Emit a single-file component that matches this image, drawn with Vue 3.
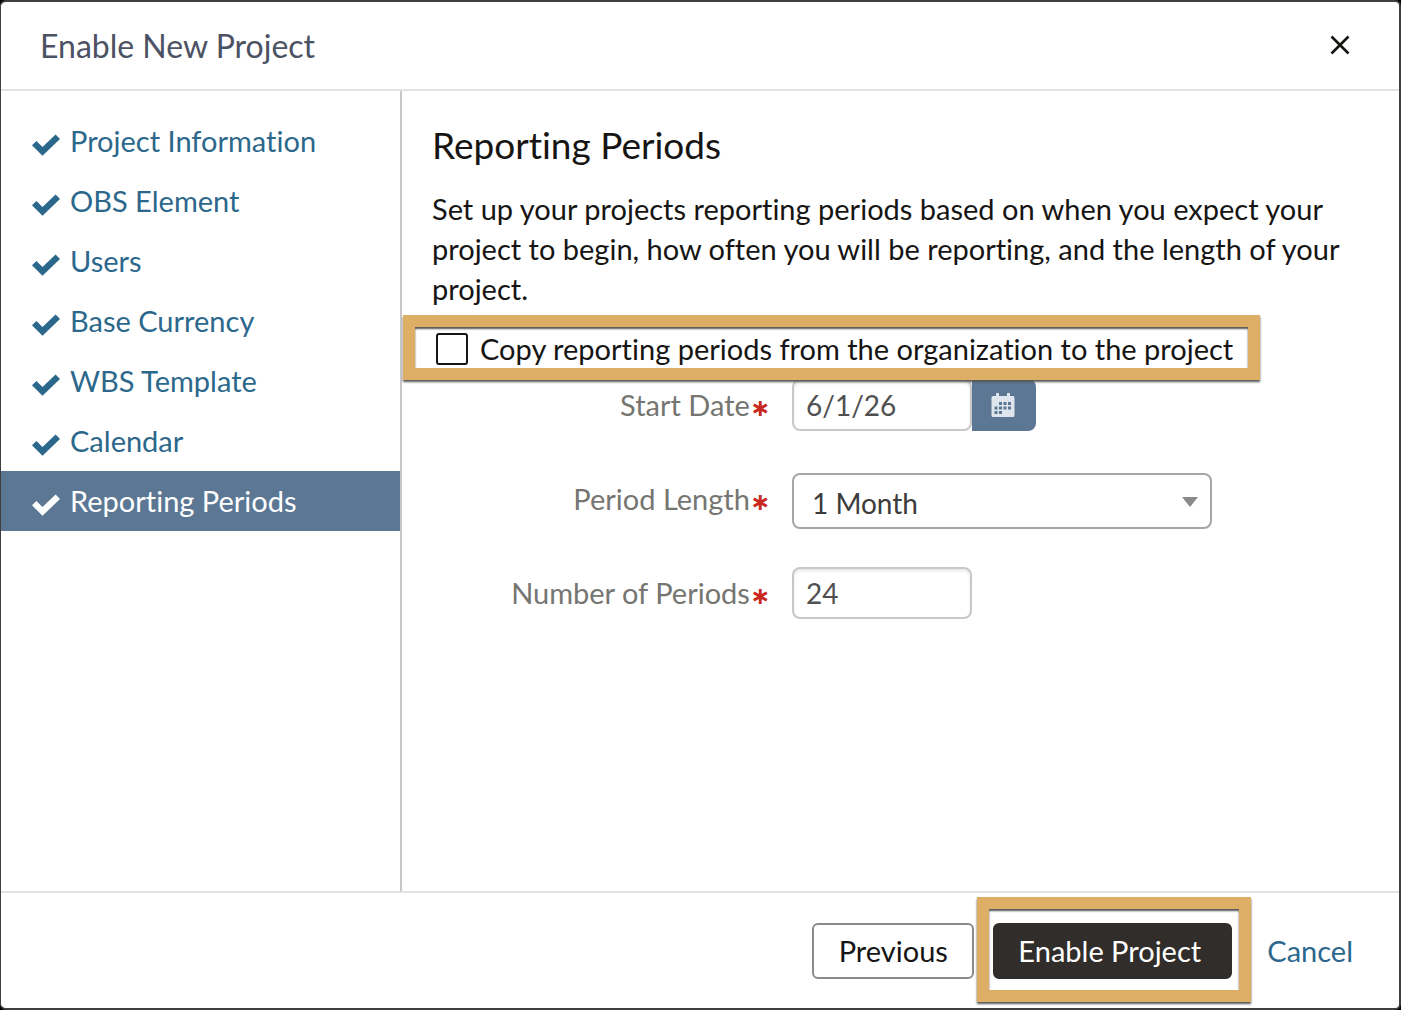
<script setup>
import { ref } from 'vue'

const steps = ['Project Information', 'OBS Element', 'Users', 'Base Currency', 'WBS Template', 'Calendar', 'Reporting Periods']
const active = ref('Reporting Periods')
const copyPeriods = ref(false)
const startDate = ref('6/1/26')
const periodLength = ref('1 Month')
const periodCount = ref('24')
</script>

<template>
  <div class="dialog" role="dialog" aria-labelledby="dialog-title">
    <header class="header">
      <h1 id="dialog-title" class="title">Enable New Project</h1>
      <button class="close" type="button" aria-label="Close">
        <svg width="20" height="20" viewBox="0 0 20 20" fill="none" stroke="#161513" stroke-width="2.6">
          <path d="M1.5 1.5 18.5 18.5M18.5 1.5 1.5 18.5" />
        </svg>
      </button>
    </header>

    <div class="body">
      <nav class="steps">
        <a v-for="step in steps" :key="step" href="#" class="step" :class="{ active: step === active }" @click.prevent="active = step">
          <svg class="check" width="28" height="22" viewBox="0 0 28 22" fill="currentColor">
            <path d="M0 11.3 4.4 6.9 10.5 13 23.6.6 28 5 10.5 21.8Z" />
          </svg>
          <span>{{ step }}</span>
        </a>
      </nav>

      <main class="content">
        <h2 class="heading">Reporting Periods</h2>
        <p class="intro">Set up your projects reporting periods based on when you expect your project to begin, how often you will be reporting, and the length of your project.</p>

        <label class="copy">
          <input v-model="copyPeriods" type="checkbox" class="box" />
          <span>Copy reporting periods from the organization to the project</span>
        </label>

        <form class="form" @submit.prevent>
          <label class="label" for="start">Start Date<span class="req">∗</span></label>
          <div class="date">
            <input id="start" v-model="startDate" class="input" type="text" />
            <button class="picker" type="button" aria-label="Choose date">
              <svg width="24" height="24" viewBox="0 0 24 24">
                <path fill="#dfe5ed" d="M2 3H5V1a1 1 0 0 1 3 0V3H16V1a1 1 0 0 1 3 0V3H22a1.5 1.5 0 0 1 1.500 1.500V22.500A1.500 1.500 0 0 1 22 24H2A1.500 1.500 0 0 1 .5 22.500V4.500A1.500 1.500 0 0 1 2 3Z" />
                <path fill="#5b7794" d="M8 9h3v3H8zM12.500 9h3v3h-3zM17 9h3v3h-3zM3.500 13.500h3v3h-3zM8 13.500h3v3H8zM12.500 13.500h3v3h-3zM17 13.500h3v3h-3zM3.500 18h3v3h-3zM8 18h3v3H8z" />
              </svg>
            </button>
          </div>

          <label class="label" for="length">Period Length<span class="req">∗</span></label>
          <div class="select-wrap">
            <select id="length" v-model="periodLength" class="select">
              <option>1 Month</option>
            </select>
          </div>

          <label class="label" for="count">Number of Periods<span class="req">∗</span></label>
          <input id="count" v-model="periodCount" class="input" type="text" />
        </form>
      </main>
    </div>

    <footer class="footer">
      <button class="btn" type="button">Previous</button>
      <button class="btn primary" type="button">Enable Project</button>
      <a href="#" class="cancel" @click.prevent>Cancel</a>
    </footer>
  </div>
</template>

<style>
body {
  background: #000;
}
</style>

<style scoped>
.dialog,
.dialog * {
  box-sizing: border-box;
}
.dialog {
  display: flex;
  flex-direction: column;
  min-height: 100vh;
  border: 2px solid #3f3e40;
  border-left-width: 1px;
  border-radius: 6px;
  background: #fff;
  color: #161513;
  font: 29px/40px Lato, "Noto Sans", sans-serif;
  font-variant-ligatures: none;
}
button,
input,
select {
  margin: 0;
  font: inherit;
  font-variant-ligatures: none;
}
.header {
  display: flex;
  align-items: center;
  justify-content: space-between;
  height: 89px;
  padding: 0 49px 0 39px;
  border-bottom: 2px solid #e3e3e3;
}
.title {
  margin: 0;
  font-size: 32px;
  font-weight: 400;
  color: #4c5263;
}
.close {
  display: flex;
  padding: 0 0 2px;
  border: 0;
  background: none;
}
.body {
  display: flex;
  flex: 1;
}
.steps {
  flex: 0 0 401px;
  padding-top: 20px;
  border-right: 2px solid #c8c8c8;
}
.step {
  display: flex;
  align-items: center;
  gap: 10px;
  height: 60px;
  padding-left: 31px;
  color: #2c678c;
  text-decoration: none;
}
.check {
  margin-top: 8px;
}
.step.active {
  background: #5b7794;
  color: #fff;
}
.content {
  flex: 1;
  min-width: 0;
  padding: 30px 59px 32px 30px;
}
.heading {
  margin: 0;
  font-size: 37px;
  line-height: 48px;
  font-weight: 400;
}
.intro {
  margin: 20px 0;
}
.copy {
  position: relative;
  display: flex;
  align-items: center;
  gap: 12px;
  width: fit-content;
  margin-left: 4px;
}
.copy::after {
  content: "";
  position: absolute;
  inset: -14px -27px -11px -33px;
  border: 12px solid #dcae66;
  box-shadow: 0 2px 2px #555, inset 0 2px 2px #555;
  pointer-events: none;
}
.box {
  appearance: none;
  width: 32px;
  height: 32px;
  border: 2px solid #161513;
  border-radius: 3px;
  background: #fff;
}
.form {
  display: grid;
  grid-template-columns: 338px 1fr;
  grid-auto-rows: 56px;
  gap: 38px 22px;
  align-items: start;
  margin-top: 10px;
}
.label {
  line-height: 52px;
  text-align: right;
  color: #757571;
}
.req {
  color: #c8281e;
  font-family: "DejaVu Sans", sans-serif;
  font-size: 24px;
  font-weight: 700;
  line-height: 1;
}
.input {
  width: 180px;
  height: 52px;
  padding: 0 12px;
  border: 2px solid #c8c8c8;
  border-radius: 8px;
  background: #fff;
  box-shadow: inset 0 2px 3px #e8e8e8;
  color: #505050;
  font-size: 28px;
}
.date {
  display: flex;
}
.picker {
  display: flex;
  align-items: center;
  justify-content: center;
  width: 64px;
  height: 52px;
  padding: 0 2px 0 0;
  border: 0;
  border-radius: 0 8px 8px 0;
  background: #5b7794;
}
.select-wrap {
  position: relative;
  width: 420px;
}
.select-wrap::after {
  content: "";
  position: absolute;
  top: 24px;
  right: 14px;
  border: 8px solid transparent;
  border-top: 10px solid #8a8a8a;
  border-bottom: 0;
  pointer-events: none;
}
.select {
  appearance: none;
  width: 100%;
  height: 56px;
  padding: 4px 18px 0;
  border: 2px solid #a6a6a6;
  border-radius: 8px;
  background: #fff;
  color: #3c3c3c;
  font-size: 28px;
}
.footer {
  display: flex;
  align-items: center;
  justify-content: flex-end;
  height: 117px;
  padding-right: 46px;
  border-top: 2px solid #e3e3e3;
}
.btn {
  position: relative;
  width: 162px;
  height: 56px;
  padding: 0;
  border: 2px solid #8b8b8a;
  border-radius: 6px;
  background: #fff;
  color: #161513;
}
.btn.primary {
  width: 239px;
  margin: 0 35px 0 19px;
  padding-right: 6px;
  border-color: #312d2a;
  background: #312d2a;
  color: #fff;
}
.primary::after {
  content: "";
  position: absolute;
  inset: -28px -21px -25px -18px;
  border: 12px solid #dcae66;
  box-shadow: 0 2px 2px #555, inset 0 2px 2px #555;
  pointer-events: none;
}
.cancel {
  color: #2c678c;
  text-decoration: none;
}
</style>
